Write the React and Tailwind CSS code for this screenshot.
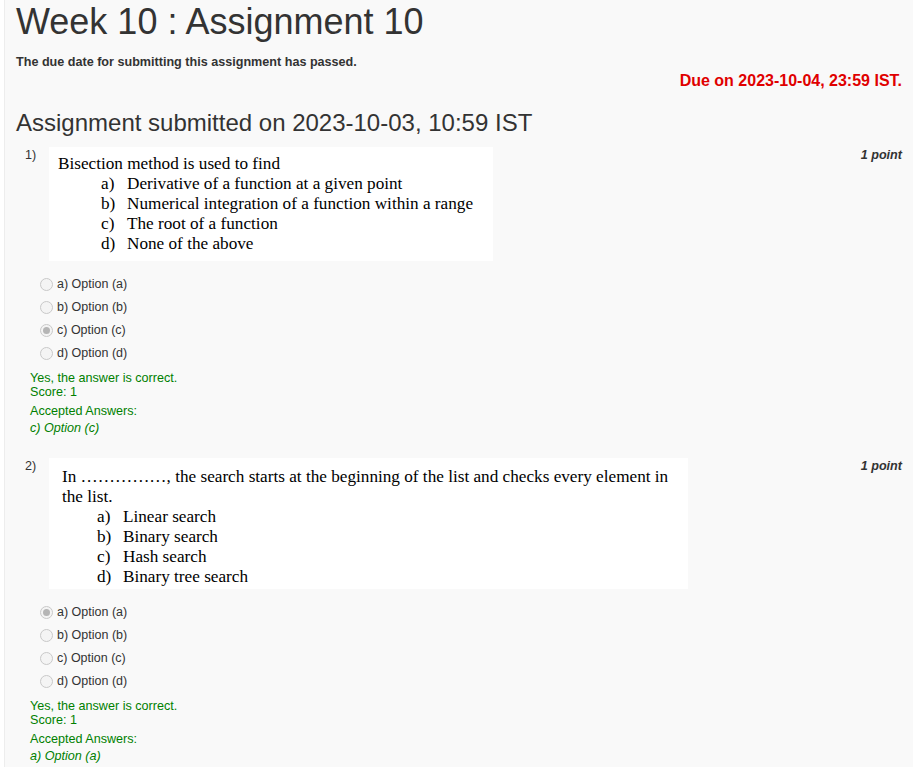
const sans = { fontFamily: '"Liberation Sans", Arial, sans-serif' };

const Radio = ({ checked }) => (
  <span className="w-[13px] h-[13px] rounded-full border border-[#c9c9c9] bg-[#f4f4f4] flex items-center justify-center flex-shrink-0">
    {checked && <span className="w-[7px] h-[7px] rounded-full bg-[#b5b5b5]" />}
  </span>
);

const Question = ({ num, box, selected, answer, first }) => (
  <div className={first ? 'mt-[10px]' : 'mt-[23px]'}>
    <div className="flex items-start pl-[20px] pr-[11px]">
      <span className="w-[24px] mt-[1px] text-[12.6px] leading-[14px] text-[#333]">{num})</span>
      {box}
      <span className="ml-auto mt-[1px] text-[12.6px] leading-[14px] font-bold italic text-[#333]">1 point</span>
    </div>

    <div className="mt-[12px] ml-[35px]">
      {['a', 'b', 'c', 'd'].map((o) => (
        <div key={o} className="h-[23px] flex items-center gap-[4px] text-[12.5px] text-[#333]">
          <Radio checked={o === selected} />
          <span>{o}) Option ({o})</span>
        </div>
      ))}
    </div>

    <div className="ml-[25px] mt-[6px] text-[12.6px] leading-[14px] text-[#008000]">
      <p>Yes, the answer is correct.</p>
      <p>Score: 1</p>
      <p className="mt-[5px]">Accepted Answers:</p>
      <p className="mt-[3px] italic">{answer}</p>
    </div>
  </div>
);

const serif = { fontFamily: '"Liberation Serif", "Times New Roman", serif' };

const App = () => {
  const box1 = (
    <div className="w-[444px] bg-white pl-[9px] pt-[7px] pb-[7px] text-[17.2px] leading-[20px] text-black" style={serif}>
      <p>Bisection method is used to find</p>
      <div className="ml-[43px]">
        {[
          ['a)', 'Derivative of a function at a given point'],
          ['b)', 'Numerical integration of a function within a range'],
          ['c)', 'The root of a function'],
          ['d)', 'None of the above'],
        ].map(([l, t]) => (
          <div key={l} className="flex whitespace-nowrap">
            <span className="w-[26px]">{l}</span>
            <span>{t}</span>
          </div>
        ))}
      </div>
    </div>
  );

  const box2 = (
    <div className="w-[639px] bg-white pl-[13px] pt-[9px] pb-[2px] text-[17.2px] leading-[20px] text-black" style={serif}>
      <p className="whitespace-nowrap">
        In ……………, the search starts at the beginning of the list and checks every element in
        <br />
        the list.
      </p>
      <div className="ml-[35px]">
        {[
          ['a)', 'Linear search'],
          ['b)', 'Binary search'],
          ['c)', 'Hash search'],
          ['d)', 'Binary tree search'],
        ].map(([l, t]) => (
          <div key={l} className="flex whitespace-nowrap">
            <span className="w-[26px]">{l}</span>
            <span>{t}</span>
          </div>
        ))}
      </div>
    </div>
  );

  return (
    <div className="min-h-screen bg-white" style={sans}>
      <div className="ml-[4px] w-[909px] min-h-[767px] bg-[#f9f9f9] border-l border-[#ededed] pb-10">

        {/* Header */}
        <div className="pl-[11px] text-[#333]">
          <h1 className="pt-[2px] text-[36px] leading-[40px]">Week 10 : Assignment 10</h1>
          <p className="mt-[11px] text-[12.6px] leading-[18px] font-bold">
            The due date for submitting this assignment has passed.
          </p>
        </div>
        <p className="text-right pr-[11px] text-[16px] leading-[20px] font-bold text-[#e00000]">
          Due on 2023-10-04, 23:59 IST.
        </p>
        <h2 className="mt-[18px] pl-[11px] text-[24px] leading-[28px] text-[#333]">
          Assignment submitted on 2023-10-03, 10:59 IST
        </h2>

        {/* Questions */}
        <Question num={1} box={box1} selected="c" answer="c) Option (c)" first />
        <Question num={2} box={box2} selected="a" answer="a) Option (a)" />
      </div>
    </div>
  );
};

export default App;
